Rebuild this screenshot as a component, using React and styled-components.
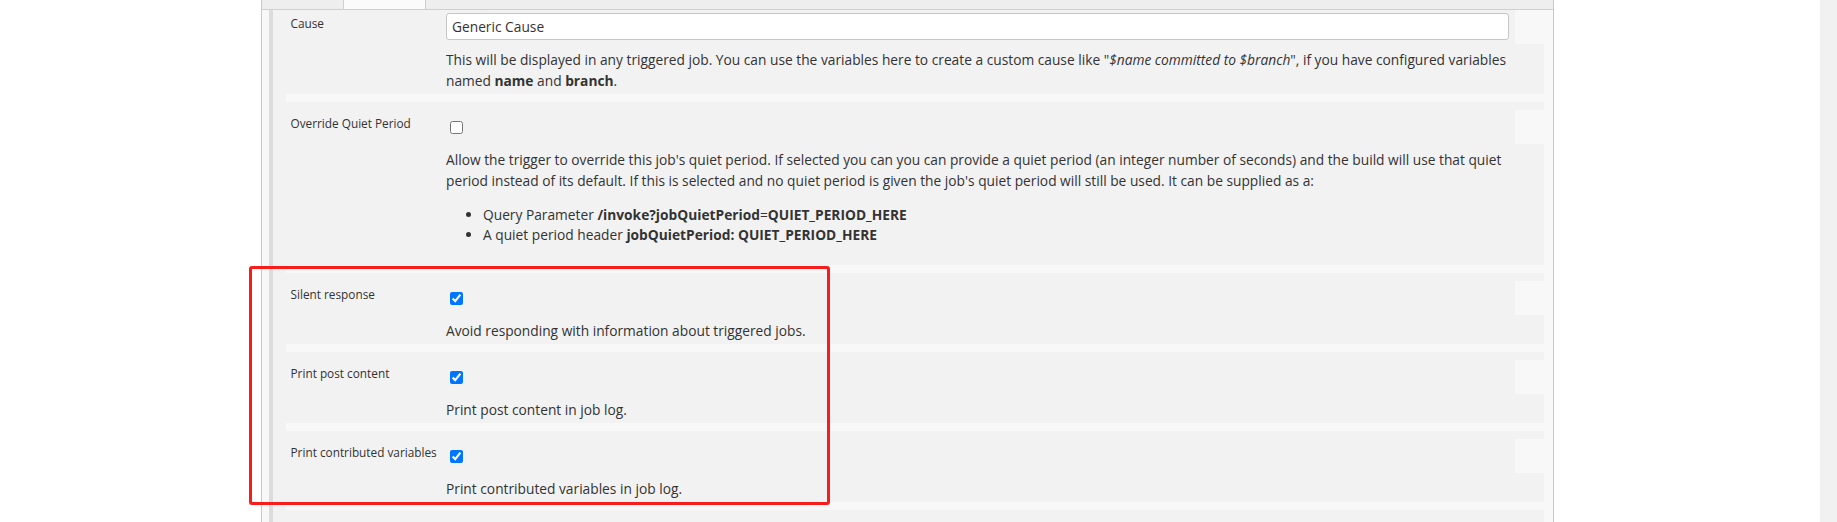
import React from 'react'
import styled, { createGlobalStyle } from 'styled-components'

const GlobalStyle = createGlobalStyle`
  html, body {
    margin: 0;
    padding: 0;
    background: #fff;
  }
  body {
    font-family: "Open Sans", "Noto Sans", sans-serif;
    color: #333;
    overflow: hidden;
  }
`;

const Page = styled.div`
  position: relative;
  display: flex;
  height: 522px;
  overflow: hidden;
`;

const Gutter = styled.div`
  width: 261px;
  flex-shrink: 0;
`;

const Panel = styled.div`
  width: 1291px;
  flex-shrink: 0;
  border-left: 1px solid #c9c9c9;
  border-right: 1px solid #c9c9c9;
  background: #f8f8f8;
  display: flex;
  flex-direction: column;
`;

const TabBar = styled.div`
  display: flex;
  height: 9px;
  border-bottom: 1px solid #cfcfcf;
  background: #eeeeee;
  flex-shrink: 0;
`;

const Tab = styled.div`
  width: ${p => p.$width}px;
  flex-shrink: 0;
  background: ${p => (p.$active ? '#fbfbfb' : '#eeeeee')};
  border-right: 1px solid #cfcfcf;
  box-sizing: border-box;
`;

const Body = styled.div`
  flex: 1;
  display: flex;
  padding: 0 9px 0 7px;
`;

const Section = styled.div`
  flex: 1;
  border-left: 4px solid #dcdcdc;
  background: #f2f2f2;
  padding-left: 13px;
`;

const Setting = styled.div`
  background: #f2f2f2;
  padding-top: ${p => (p.$flush ? 0 : 8)}px;
`;

const Main = styled.div`
  display: grid;
  grid-template-columns: 160px 1fr 29px;
  height: 34px;
`;

const Label = styled.div`
  padding: 5px 0 0 4.5px;
  font-size: 11.8px;
  line-height: 16px;
  color: #333;
  white-space: nowrap;
`;

const Control = styled.div`
  display: flex;
  align-items: center;
  padding-right: 6px;
`;

const HelpCell = styled.div`
  background: #f8f8f8;
`;

const TextInput = styled.input`
  flex: 1;
  height: 27px;
  box-sizing: border-box;
  margin: 0 0 2px 0;
  padding: 0 5px;
  border: 1px solid #c6c6c6;
  border-radius: 3px;
  background: #fff;
  font-family: "Open Sans", "Noto Sans", sans-serif;
  font-size: 13.75px;
  color: #333;
  outline: none;
`;

const Check = styled.input`
  width: 13px;
  height: 13px;
  margin: 3px 3px 3px 4px;
`;

const Help = styled.div`
  padding: 5px 23px 3px 160px;
  font-size: 13.75px;
  line-height: 21px;
  color: #333;

  p {
    margin: 0;
  }
`;

const Bullets = styled.ul`
  margin: 14px 0 17px;
  padding-left: 37px;

  li {
    line-height: 20px;
  }
`;

const Divider = styled.div`
  height: 8px;
  background: #f8f8f8;
`;

const Filler = styled.div`
  height: 40px;
`;

const Spacer = styled.div`
  flex: 1;
`;

const Scrollbar = styled.div`
  width: 17px;
  flex-shrink: 0;
  background: #f1f1f1;
`;

const Highlight = styled.div`
  position: absolute;
  left: 249px;
  top: 266px;
  width: 581px;
  height: 239px;
  box-sizing: border-box;
  border: 3px solid #f81c1c;
  border-radius: 3px;
  pointer-events: none;
`;

function CheckSetting({ label, checked, children }) {
  return (
    <>
      <Setting>
        <Main>
          <Label>{label}</Label>
          <Control>
            <Check type="checkbox" defaultChecked={checked} />
          </Control>
          <HelpCell />
        </Main>
        <Help>{children}</Help>
      </Setting>
      <Divider />
    </>
  )
}

export default function App() {
  return (
    <Page>
      <GlobalStyle />
      <Gutter />
      <Panel>
        <TabBar>
          <Tab $width={82} />
          <Tab $width={82} $active />
        </TabBar>
        <Body>
          <Section>
            <Setting $flush>
              <Main>
                <Label>Cause</Label>
                <Control>
                  <TextInput type="text" defaultValue="Generic Cause" />
                </Control>
                <HelpCell />
              </Main>
              <Help>
                <p>
                  This will be displayed in any triggered job. You can use the variables here to create a custom
                  cause like "<i>$name committed to $branch</i>", if you have configured variables named{' '}
                  <b>name</b> and <b>branch</b>.
                </p>
              </Help>
            </Setting>
            <Divider />

            <CheckSetting label="Override Quiet Period" checked={false}>
              <p>
                Allow the trigger to override this job's quiet period. If selected you can you can provide a quiet
                period (an integer number of seconds) and the build will use that quiet period instead of its
                default. If this is selected and no quiet period is given the job's quiet period will still be used.
                It can be supplied as a:
              </p>
              <Bullets>
                <li>
                  Query Parameter <b>/invoke?jobQuietPeriod</b>=<b>QUIET_PERIOD_HERE</b>
                </li>
                <li>
                  A quiet period header <b>jobQuietPeriod: QUIET_PERIOD_HERE</b>
                </li>
              </Bullets>
            </CheckSetting>

            <CheckSetting label="Silent response" checked>
              Avoid responding with information about triggered jobs.
            </CheckSetting>

            <CheckSetting label="Print post content" checked>
              Print post content in job log.
            </CheckSetting>

            <CheckSetting label="Print contributed variables" checked>
              Print contributed variables in job log.
            </CheckSetting>

            <Filler />
          </Section>
        </Body>
      </Panel>
      <Spacer />
      <Scrollbar />
      <Highlight />
    </Page>
  )
}
